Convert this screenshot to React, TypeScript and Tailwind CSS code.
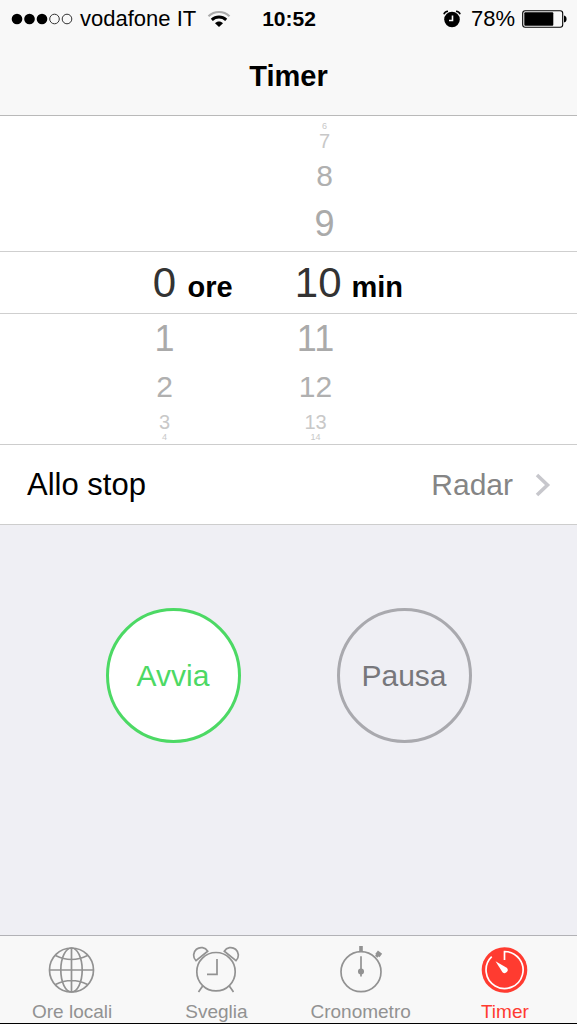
import type { ReactNode } from "react";

type WheelRow = { hours?: string; minutes: string; className: string };

const rowsAbove: WheelRow[] = [
  { minutes: "6", className: "h-2 text-[9px] leading-[8px] text-[#c8c8c8]" },
  { minutes: "7", className: "h-[22px] text-[20px] leading-[22px] text-[#c8c8c8]" },
  { minutes: "8", className: "h-12 text-[30px] leading-[48px] text-[#b0b0b0]" },
  { minutes: "9", className: "h-12 text-[36px] leading-[48px] text-[#aaaaaa]" },
];

const rowsBelow: WheelRow[] = [
  { hours: "1", minutes: "11", className: "h-12 text-[36px] leading-[48px] text-[#aaaaaa]" },
  { hours: "2", minutes: "12", className: "h-12 text-[30px] leading-[48px] text-[#b0b0b0]" },
  { hours: "3", minutes: "13", className: "h-[22px] text-[20px] leading-[22px] text-[#c8c8c8]" },
  { hours: "4", minutes: "14", className: "h-2 text-[9px] leading-[8px] text-[#c8c8c8]" },
];

function PickerRow({ hours, minutes, className }: WheelRow) {
  return (
    <div className={`mx-auto flex w-[272px] ${className}`}>
      <span className="w-6 text-center">{hours}</span>
      <span className={`text-center ${minutes.length > 1 ? "ml-[118px] w-[42px]" : "ml-[136px] w-6"}`}>{minutes}</span>
    </div>
  );
}

function StatusBar() {
  return (
    <div className="flex h-[37px] items-center text-[22px]">
      <div className="flex flex-1 items-center pl-[11px]">
        <svg width="62" height="12" viewBox="0 0 62 12" aria-hidden="true">
          <circle cx="6" cy="6" r="5.3" />
          <circle cx="18.5" cy="6" r="5.3" />
          <circle cx="31" cy="6" r="5.3" />
          <circle cx="43.5" cy="6" r="4.8" fill="none" stroke="#333" />
          <circle cx="56" cy="6" r="4.8" fill="none" stroke="#333" />
        </svg>
        <span className="ml-[7px] whitespace-nowrap">vodafone IT</span>
        <svg className="ml-[11px]" width="24" height="18" viewBox="0 0 24 18" fill="none" aria-hidden="true">
          <path d="M1.5 6.2C7.5.6 16.5.6 22.5 6.2" stroke="#aaa" strokeWidth="2.2" />
          <path d="M4.8 9.8C9 6 15 6 19.2 9.8" stroke="#000" strokeWidth="3" />
          <path d="M8 13.2C10.3 11 13.7 11 16 13.2L12 17Z" fill="#000" />
        </svg>
      </div>
      <span className="text-[21px] font-bold">10:52</span>
      <div className="flex flex-1 items-center justify-end pr-[10px]">
        <svg width="18" height="18" viewBox="0 0 18 18" fill="none" aria-hidden="true">
          <circle cx="9" cy="9.5" r="7.8" fill="#000" />
          <path d="M9.5 5.5V10.5H6" stroke="#f8f8f8" strokeWidth="1.6" />
          <path d="M.9 4.2Q1.8 1.4 5 1.2M17.1 4.2Q16.2 1.4 13 1.2" stroke="#000" strokeWidth="1.6" />
        </svg>
        <span className="ml-[10px]">78%</span>
        <svg className="ml-[7px]" width="45" height="18" viewBox="0 0 45 18" aria-hidden="true">
          <rect x=".7" y=".7" width="40" height="16.6" rx="2.5" fill="none" stroke="#000" strokeWidth="1.1" />
          <rect x="2.3" y="2.3" width="29" height="13.4" rx="1" />
          <path d="M42 5.5Q44.6 6 44.6 9Q44.6 12 42 12.5Z" />
        </svg>
      </div>
    </div>
  );
}

function GlobeIcon() {
  return (
    <svg width="48" height="48" viewBox="0 0 48 48" fill="none" stroke="currentColor" strokeWidth="1.7" aria-hidden="true">
      <circle cx="23.5" cy="24" r="22" />
      <ellipse cx="23.5" cy="24" rx="10.7" ry="22" />
      <path d="M23.5 2V46M1.5 24H45.5M7.5 9.5Q23.5 17.5 39.5 9.5M7.5 38.5Q23.5 30.5 39.5 38.5" />
    </svg>
  );
}

function AlarmIcon() {
  return (
    <svg width="48" height="48" viewBox="0 0 48 48" fill="none" stroke="currentColor" strokeWidth="1.7" aria-hidden="true">
      <circle cx="24" cy="25.7" r="19.2" />
      <path d="M25 13V28.3H15" />
      <path d="M4 14.7A7.6 7.6 0 1 1 15.7 5.2Z" />
      <path d="M44 14.7A7.6 7.6 0 1 0 32.3 5.2Z" />
      <path d="M10.7 40L6.5 46M37.3 40L41.5 46" />
    </svg>
  );
}

function StopwatchIcon() {
  return (
    <svg width="48" height="48" viewBox="0 0 48 48" fill="none" stroke="currentColor" strokeWidth="1.7" aria-hidden="true">
      <circle cx="24" cy="25.7" r="20" />
      <path d="M24 0V6" strokeWidth="3.6" />
      <path d="M24 10.3V30.5" />
      <circle cx="24" cy="25.5" r="2.2" fill="currentColor" />
      <path d="M39.2 10.8L41 8.6" strokeWidth="3" />
      <path d="M39.6 6.2L43.8 9.4" strokeWidth="4.4" />
    </svg>
  );
}

function TimerIcon() {
  return (
    <svg width="48" height="48" viewBox="0 0 48 48" fill="none" aria-hidden="true">
      <circle cx="23.5" cy="24" r="22.8" fill="currentColor" />
      <path d="M23.5 14V5.5A18.5 18.5 0 1 1 10.7 10.7" stroke="#fff" strokeWidth="1.7" />
      <path d="M14.5 15.2L25.7 21.8A3 3 0 0 1 21.5 26.2Z" fill="#fff" />
    </svg>
  );
}

function Tab({ label, icon, active = false }: { label: string; icon: ReactNode; active?: boolean }) {
  return (
    <a
      href="#"
      aria-current={active ? "page" : undefined}
      className={`flex flex-1 flex-col items-center pt-[10px] text-[19px] leading-[22px] ${
        active ? "text-[#ff3b30]" : "text-[#929292]"
      }`}
    >
      {icon}
      <span className="mt-[7px]">{label}</span>
    </a>
  );
}

export default function App() {
  return (
    <div className="flex min-h-screen flex-col bg-[#efeff4] font-['Liberation_Sans',Arial,sans-serif] text-black">
      <header className="border-b border-[#b9b9b9] bg-[#f8f8f8]">
        <StatusBar />
        <h1 className="h-[78px] pt-[22px] text-center text-[29px] leading-[34px] font-bold">Timer</h1>
      </header>

      <main className="flex flex-1 flex-col">
        <section aria-label="Durata" className="border-b border-[#cdcdcd] bg-white">
          <div className="pt-[6px] pb-[3px]">
            {rowsAbove.map((row) => (
              <PickerRow key={row.minutes} {...row} />
            ))}
          </div>
          <div className="border-y border-[#cfcfcf]">
            <div className="mx-auto flex h-[61px] w-[272px] items-baseline leading-[61px]">
              <span className="w-6 text-center text-[42px] text-[#333]">0</span>
              <span className="ml-[11px] w-[70px] text-[29px] font-bold">ore</span>
              <span className="ml-9 w-12 text-right text-[42px] text-[#333]">10</span>
              <span className="ml-[10px] text-[29px] font-bold">min</span>
            </div>
          </div>
          <div className="pt-[1px] pb-[3px]">
            {rowsBelow.map((row) => (
              <PickerRow key={row.minutes} {...row} />
            ))}
          </div>
        </section>

        <button
          type="button"
          className="flex h-20 w-full items-center border-b border-[#cdcdcd] bg-white pr-[26px] pl-[27px] text-[31px]"
        >
          <span className="flex flex-1 items-baseline justify-between pt-[2px]">
            <span>Allo stop</span>
            <span className="text-[30px] text-[#858585]">Radar</span>
          </span>
          <svg className="ml-[22px]" width="16" height="24" viewBox="0 0 16 24" fill="none" aria-hidden="true">
            <path d="M2 2L12.5 12L2 22" stroke="#c7c7cc" strokeWidth="3.6" />
          </svg>
        </button>

        <div className="flex justify-center gap-24 pt-[83px] text-[30px]">
          <button type="button" className="size-[135px] rounded-full border-3 border-[#4cd964] bg-white text-[#4cd964]">
            Avvia
          </button>
          <button type="button" className="size-[135px] rounded-full border-3 border-[#a9a9ae] text-[#77777b]">
            Pausa
          </button>
        </div>
      </main>

      <nav className="flex h-[89px] border-t border-b border-t-[#b2b2b6] border-b-black bg-[#f8f8f8]">
        <Tab label="Ore locali" icon={<GlobeIcon />} />
        <Tab label="Sveglia" icon={<AlarmIcon />} />
        <Tab label="Cronometro" icon={<StopwatchIcon />} />
        <Tab label="Timer" icon={<TimerIcon />} active />
      </nav>
    </div>
  );
}
